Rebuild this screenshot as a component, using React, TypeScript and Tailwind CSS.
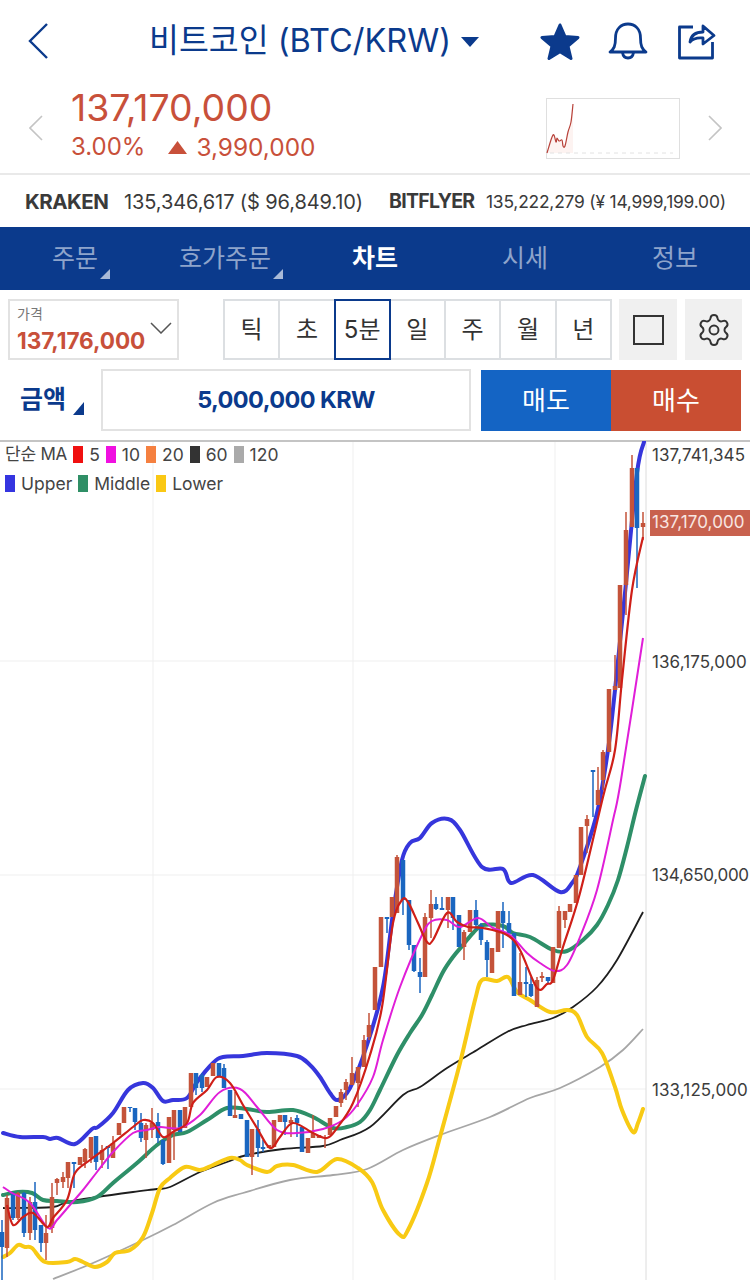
import { Settings } from 'lucide-react';

type Pt = [number, number];
// x, wick top, wick bottom, body top, body bottom, up
type Candle = [number, number, number, number, number, 0 | 1];

const NAVY = '#0b3a8c';
const RED = '#c8503a';

const upper: Pt[] = [
  [3, 1133], [20, 1137], [43, 1137], [50, 1139], [58, 1138], [75, 1144], [92, 1129], [98, 1127],
  [113, 1113], [128, 1090], [143, 1083], [153, 1088], [163, 1101], [173, 1100], [187, 1098],
  [197, 1082], [213, 1063], [223, 1057], [243, 1056], [267, 1053], [297, 1056], [310, 1065],
  [320, 1077], [330, 1093], [338, 1100], [350, 1088], [367, 1045], [383, 987], [393, 913],
  [402, 860], [410, 843], [420, 838], [432, 823], [448, 819], [460, 830], [482, 867], [503, 869],
  [511, 883], [533, 875], [560, 892], [572, 883], [580, 867], [597, 813], [608, 750], [615, 690],
  [625, 593], [637, 473], [644, 442],
];
const middle: Pt[] = [
  [3, 1195], [18, 1192], [32, 1193], [43, 1200], [57, 1201], [77, 1202], [97, 1197], [113, 1183],
  [137, 1163], [157, 1145], [173, 1135], [187, 1132], [207, 1120], [227, 1108], [247, 1109],
  [267, 1112], [293, 1110], [313, 1117], [333, 1128], [347, 1127], [360, 1122], [370, 1110],
  [380, 1090], [397, 1055], [410, 1033], [422, 1015], [432, 995], [443, 972], [453, 957],
  [463, 945], [473, 933], [483, 925], [503, 926], [513, 933], [530, 937], [553, 950], [567, 951],
  [583, 940], [597, 925], [608, 905], [618, 880], [627, 847], [636, 810], [645, 776],
];
const lower: Pt[] = [
  [3, 1257], [10, 1253], [18, 1245], [25, 1247], [32, 1248], [45, 1262], [67, 1262], [75, 1259],
  [83, 1262], [95, 1267], [107, 1262], [115, 1253], [130, 1250], [143, 1237], [152, 1213],
  [160, 1188], [170, 1178], [185, 1167], [200, 1170], [213, 1165], [230, 1158], [240, 1160],
  [247, 1165], [267, 1172], [277, 1166], [293, 1165], [317, 1172], [337, 1159], [358, 1168],
  [372, 1182], [383, 1210], [400, 1235], [408, 1230], [427, 1183], [440, 1137], [460, 1063],
  [475, 1000], [482, 980], [497, 981], [508, 977], [517, 992], [530, 1000], [550, 1012],
  [567, 1010], [577, 1015], [587, 1037], [602, 1053], [615, 1087], [622, 1110], [633, 1132],
  [638, 1123], [643, 1109],
];
const ma60: Pt[] = [
  [3, 1208], [17, 1208], [53, 1207], [67, 1202], [97, 1197], [133, 1192], [157, 1189], [170, 1187],
  [200, 1172], [227, 1162], [247, 1155], [283, 1149], [323, 1146], [340, 1140], [370, 1127],
  [403, 1095], [420, 1087], [447, 1068], [477, 1050], [507, 1032], [527, 1025], [553, 1018],
  [573, 1007], [597, 987], [617, 960], [643, 912],
];
const ma120: Pt[] = [
  [53, 1279], [93, 1263], [143, 1240], [173, 1225], [213, 1203], [243, 1193], [290, 1180],
  [333, 1175], [367, 1169], [403, 1150], [440, 1135], [490, 1117], [530, 1098], [560, 1088],
  [600, 1067], [623, 1050], [643, 1029],
];
const ma10: Pt[] = [
  [3, 1187], [12, 1193], [30, 1203], [48, 1228], [57, 1220], [70, 1205], [83, 1190], [97, 1172],
  [113, 1152], [133, 1133], [147, 1130], [160, 1127], [180, 1128], [200, 1115], [220, 1092],
  [240, 1089], [257, 1107], [277, 1130], [297, 1133], [323, 1129], [343, 1120], [357, 1105],
  [373, 1077], [383, 1040], [400, 987], [422, 935], [432, 921], [447, 920], [460, 927], [478, 918],
  [493, 928], [510, 935], [527, 953], [540, 963], [555, 971], [567, 965], [580, 937], [597, 890],
  [613, 820], [621, 780], [643, 638],
];
const ma5: Pt[] = [
  [7, 1205], [13, 1225], [23, 1217], [33, 1213], [47, 1227], [53, 1218], [67, 1200], [75, 1173],
  [90, 1160], [113, 1143], [133, 1127], [143, 1120], [153, 1123], [163, 1137], [173, 1132],
  [187, 1123], [193, 1103], [207, 1090], [217, 1077], [230, 1083], [243, 1105], [257, 1128],
  [270, 1148], [280, 1137], [293, 1123], [313, 1133], [327, 1138], [337, 1128], [353, 1103],
  [370, 1055], [382, 1007], [393, 923], [402, 900], [408, 902], [418, 923], [427, 942], [433, 940],
  [447, 913], [457, 922], [468, 927], [483, 928], [507, 935], [520, 950], [537, 988], [547, 984],
  [553, 980], [563, 947], [580, 893], [603, 797], [615, 750], [622, 680], [632, 590], [643, 537],
];

const candles: Candle[] = [
  [2, 1220, 1280, 1232, 1247, 0], [7, 1195, 1257, 1198, 1248, 1], [13, 1192, 1220, 1193, 1218, 0],
  [18, 1192, 1220, 1193, 1218, 1], [24, 1192, 1237, 1193, 1233, 0], [30, 1197, 1240, 1202, 1233, 1],
  [35, 1182, 1240, 1202, 1230, 0], [41, 1225, 1252, 1225, 1243, 0], [46, 1215, 1260, 1233, 1243, 1],
  [52, 1183, 1233, 1197, 1228, 1], [57, 1178, 1195, 1179, 1183, 1], [63, 1172, 1188, 1177, 1182, 1],
  [68, 1162, 1188, 1162, 1178, 1], [74, 1162, 1188, 1162, 1164, 0], [80, 1157, 1165, 1157, 1165, 1],
  [85, 1148, 1168, 1149, 1162, 1], [91, 1137, 1163, 1137, 1158, 1], [96, 1136, 1170, 1136, 1162, 0],
  [102, 1145, 1168, 1150, 1160, 1], [108, 1146, 1169, 1146, 1148, 0], [113, 1136, 1158, 1143, 1158, 1],
  [119, 1123, 1135, 1123, 1135, 1], [124, 1107, 1123, 1107, 1123, 1], [130, 1107, 1112, 1107, 1108, 0],
  [135, 1108, 1130, 1108, 1122, 0], [141, 1113, 1142, 1123, 1138, 0], [146, 1123, 1158, 1125, 1140, 1],
  [152, 1108, 1138, 1123, 1130, 1], [158, 1113, 1143, 1122, 1138, 0], [163, 1140, 1165, 1140, 1164, 0],
  [169, 1117, 1163, 1117, 1163, 1], [174, 1110, 1160, 1110, 1130, 1], [180, 1110, 1132, 1110, 1132, 0],
  [185, 1107, 1128, 1107, 1128, 1], [191, 1073, 1107, 1073, 1107, 1], [196, 1073, 1095, 1073, 1088, 0],
  [202, 1073, 1092, 1075, 1088, 0], [207, 1077, 1087, 1077, 1087, 1], [213, 1063, 1076, 1063, 1076, 1],
  [219, 1063, 1076, 1063, 1076, 0], [224, 1064, 1088, 1068, 1088, 0], [230, 1090, 1116, 1090, 1116, 0],
  [235, 1092, 1118, 1115, 1118, 1], [241, 1114, 1119, 1114, 1119, 0], [247, 1120, 1157, 1120, 1157, 0],
  [252, 1129, 1175, 1129, 1157, 1], [258, 1120, 1157, 1129, 1148, 0], [263, 1140, 1152, 1147, 1149, 0],
  [269, 1145, 1148, 1145, 1148, 1], [274, 1120, 1147, 1120, 1147, 1], [280, 1115, 1122, 1115, 1122, 1],
  [285, 1115, 1135, 1115, 1122, 0], [291, 1117, 1137, 1120, 1123, 1], [297, 1115, 1137, 1118, 1123, 0],
  [302, 1127, 1152, 1127, 1152, 0], [308, 1138, 1153, 1138, 1153, 1], [313, 1115, 1138, 1133, 1138, 1],
  [319, 1135, 1138, 1135, 1138, 1], [325, 1135, 1148, 1137, 1138, 1], [330, 1118, 1135, 1118, 1135, 1],
  [336, 1106, 1117, 1106, 1117, 1], [341, 1089, 1107, 1092, 1103, 1], [346, 1079, 1100, 1082, 1090, 1],
  [352, 1057, 1085, 1073, 1085, 1], [358, 1067, 1107, 1067, 1083, 1], [364, 1035, 1067, 1040, 1067, 1],
  [369, 1013, 1040, 1025, 1037, 1], [375, 967, 1010, 967, 1010, 1], [381, 917, 967, 917, 967, 1],
  [387, 917, 933, 917, 919, 0], [392, 897, 917, 897, 917, 1], [397, 855, 913, 857, 913, 1],
  [403, 860, 915, 860, 900, 0], [409, 900, 950, 900, 945, 0], [414, 945, 972, 945, 971, 0],
  [420, 958, 993, 972, 977, 0], [425, 913, 977, 917, 977, 1], [431, 890, 938, 904, 918, 1],
  [436, 897, 910, 904, 909, 0], [442, 897, 910, 908, 910, 0], [448, 897, 928, 897, 910, 1],
  [453, 897, 930, 897, 918, 0], [459, 915, 947, 915, 947, 0], [464, 930, 960, 932, 947, 1],
  [470, 910, 932, 910, 932, 1], [476, 900, 930, 910, 925, 0], [481, 923, 945, 925, 940, 0],
  [487, 940, 977, 942, 960, 0], [492, 948, 973, 948, 973, 1], [498, 911, 952, 911, 952, 1],
  [503, 902, 948, 911, 923, 0], [509, 911, 935, 923, 933, 0], [514, 933, 996, 933, 996, 0],
  [520, 953, 995, 982, 995, 1], [526, 967, 997, 982, 984, 0], [531, 977, 997, 984, 996, 0],
  [537, 977, 1007, 980, 1007, 1], [542, 972, 982, 976, 978, 1], [548, 977, 984, 977, 981, 0],
  [553, 947, 983, 947, 983, 1], [559, 906, 948, 911, 948, 1], [565, 911, 928, 911, 920, 1],
  [570, 904, 912, 904, 912, 1], [576, 875, 903, 875, 903, 1], [581, 827, 875, 827, 875, 1],
  [587, 815, 853, 819, 826, 1], [593, 770, 817, 770, 772, 0], [598, 767, 805, 790, 805, 1],
  [603, 750, 790, 752, 780, 1], [609, 689, 752, 689, 752, 1], [615, 655, 690, 686, 690, 1],
  [620, 585, 688, 585, 688, 1], [626, 512, 615, 530, 585, 1], [632, 455, 527, 468, 527, 1],
  [637, 468, 588, 468, 528, 0], [643, 512, 540, 523, 527, 1],
];

const spark: Pt[] = [
  [547, 153], [553, 135], [556, 142], [557, 138], [559, 141], [562, 140], [563, 146], [565, 146],
  [568, 132], [571, 122], [573, 104],
];

// catmull-rom로 부드럽게 연결
const smooth = (pts: Pt[]) => {
  let d = `M${pts[0][0]} ${pts[0][1]}`;
  for (let i = 0; i < pts.length - 1; i++) {
    const p0 = pts[Math.max(i - 1, 0)];
    const p1 = pts[i];
    const p2 = pts[i + 1];
    const p3 = pts[Math.min(i + 2, pts.length - 1)];
    const c1x = p1[0] + (p2[0] - p0[0]) / 6;
    const c1y = p1[1] + (p2[1] - p0[1]) / 6;
    const c2x = p2[0] - (p3[0] - p1[0]) / 6;
    const c2y = p2[1] - (p3[1] - p1[1]) / 6;
    d += ` C${c1x} ${c1y} ${c2x} ${c2y} ${p2[0]} ${p2[1]}`;
  }
  return d;
};

function Chevron({ dir, color, className }: { dir: 'l' | 'r'; color: string; className: string }) {
  return (
    <svg viewBox="0 0 14 26" className={className} fill="none" stroke={color} strokeWidth="1.6">
      <path d={dir === 'l' ? 'M13 1 1 13l12 12' : 'M1 1l12 12L1 25'} />
    </svg>
  );
}

function Header() {
  return (
    <div className="flex h-[82px] items-center">
      <svg viewBox="0 0 20 36" className="ml-[28px] h-[36px] w-[20px]" fill="none" stroke={NAVY} strokeWidth="2.4">
        <path d="M19 1 2 18l17 17" />
      </svg>
      <div className="ml-[101px] flex items-center">
        <span className="text-[32.5px] leading-none text-[#0b3a8c]">비트코인 (BTC/KRW)</span>
        <svg viewBox="0 0 18 10" className="ml-[10px] mt-[2px] h-[10px] w-[18px]" fill={NAVY}>
          <path d="M0 0h18L9 10z" />
        </svg>
      </div>
      <div className="ml-auto mr-[34px] flex items-center">
        <svg viewBox="0 0 40 38" className="h-[38px] w-[40px]" fill={NAVY} stroke={NAVY} strokeWidth="3" strokeLinejoin="round">
          <path d="M20 3l5 11.5 13 1-10 8.5 3 12.5-11-6.700-11 6.700 3-12.500-10-8.500 13-1z" />
        </svg>
        <svg viewBox="0 0 40 38" className="ml-[28px] h-[38px] w-[40px]" fill="none" stroke={NAVY} strokeWidth="2.8" strokeLinejoin="round">
          <path d="M2 30c4-3 5.500-6 5.500-14C7.500 7 13 2 20 2s12.500 5 12.500 14c0 8 1.500 11 5.500 14z" />
          <path d="M14.500 30.500c.5 3.500 2.500 5.500 5.500 5.500s5-2 5.500-5.500" />
        </svg>
        <svg viewBox="0 0 38 38" className="ml-[30px] h-[38px] w-[38px]" fill="none" stroke={NAVY} strokeWidth="2.8" strokeLinejoin="round">
          <path d="M15 5H1.500v31h33V20" />
          <path d="M12 20c1-6.500 6-10 13-10V4l11 9.500L25 22v-6c-5-.5-10 .5-13 4z" />
        </svg>
      </div>
    </div>
  );
}

function PriceRow() {
  return (
    <div className="flex h-[93px] items-start border-b-2 border-[#e9e9e9]">
      <Chevron dir="l" color="#c4c4c4" className="ml-[29px] mt-[33px] h-[26px] w-[14px]" />
      <div className="ml-[28px] text-[#c8503a]">
        <div className="mt-[4px] text-[37.400px] leading-[44px]">137,170,000</div>
        <div className="mt-[2px] flex items-center text-[24px] leading-[30px]">
          <span>3.00%</span>
          <svg viewBox="0 0 19 13" className="ml-[23px] mr-[9px] h-[13px] w-[19px]" fill={RED}>
            <path d="M9.500 0 19 13H0z" />
          </svg>
          <span className="text-[24.400px]">3,990,000</span>
        </div>
      </div>
      <svg viewBox="546 98 134 61" className="ml-auto mt-[16px] h-[61px] w-[134px]" fill="none">
        <rect x="546.500" y="98.500" width="133" height="60" stroke="#dfdfdf" />
        <path d="M547 153 553 135 556 142 559 141 562 140 565 146 568 132 571 122 573 104V153z" fill="#fdf3f1" />
        <path d="M550 153h123" stroke="#e2e2e2" strokeDasharray="4 4" />
        <path d={smooth(spark)} stroke="#b8423a" strokeWidth="1.200" />
      </svg>
      <Chevron dir="r" color="#c4c4c4" className="ml-[28px] mr-[28px] mt-[33px] h-[26px] w-[14px]" />
    </div>
  );
}

function ExchangeRow() {
  return (
    <div className="flex h-[52px] items-center whitespace-nowrap pl-[25px] pt-[2px] text-[#3a3a3a]">
      <span className="w-[99px] text-[20.500px] font-bold tracking-[-0.5px]">KRAKEN</span>
      <span className="w-[265px] text-[20px] tracking-[-0.1px]">135,346,617 ($ 96,849.10)</span>
      <span className="w-[97px] text-[19.500px] font-bold tracking-[-0.7px]">BITFLYER</span>
      <span className="text-[17.400px] tracking-[-0.2px]">135,222,279 (¥ 14,999,199.00)</span>
    </div>
  );
}

const tabs = [
  { label: '주문', corner: true },
  { label: '호가주문', corner: true },
  { label: '차트', active: true },
  { label: '시세' },
  { label: '정보' },
];

function Tabs() {
  return (
    <div className="grid h-[63px] grid-cols-5 bg-[#0b3a8c]">
      {tabs.map((tab) => (
        <div key={tab.label} className="flex items-center justify-center">
          <span
            className={`relative text-[25px] leading-none ${
              tab.active ? 'font-bold text-white' : 'text-[#8ea4cb]'
            }`}
          >
            {tab.label}
            {tab.corner && (
              <svg viewBox="0 0 10 10" className="absolute -right-[12px] bottom-[-8px] h-[10px] w-[10px]" fill="#a9bad8">
                <path d="M10 0v10H0z" />
              </svg>
            )}
          </span>
        </div>
      ))}
    </div>
  );
}

const periods = ['틱', '초', '5분', '일', '주', '월', '년'];

function Controls() {
  return (
    <div className="mt-[9px] flex h-[61px] pl-[8px]">
      <div className="relative h-[61px] w-[171px] border-2 border-[#e2e2e2] pl-[7px]">
        <div className="mt-[3px] text-[14px] leading-[20px] text-[#777]">가격</div>
        <div className="mt-[4px] text-[22.600px] font-bold leading-[26px] tracking-[-0.1px] text-[#c8503a]">137,176,000</div>
        <svg viewBox="0 0 22 12" className="absolute right-[5px] top-[21px] h-[12px] w-[22px]" fill="none" stroke="#555" strokeWidth="1.500">
          <path d="M1 1l10 10L21 1" />
        </svg>
      </div>
      <div className="ml-[44px] flex h-[61px] w-[389px] border-2 border-[#dcdfe2]">
        {periods.map((p) =>
          p === '5분' ? (
            <div key={p} className="-my-[2px] flex w-[57px] shrink-0 items-center justify-center border-2 border-[#0b3a8c] text-[24px] text-[#333]">
              {p}
            </div>
          ) : (
            <div key={p} className="flex flex-1 items-center justify-center border-l-2 border-[#dcdfe2] text-[24px] text-[#333] first:border-l-0 [&:nth-child(4)]:border-l-0">
              {p}
            </div>
          )
        )}
      </div>
      <div className="ml-[7px] flex h-[61px] w-[58px] items-center justify-center bg-[#f0f0f0]">
        <div className="h-[30px] w-[31px] border-2 border-[#333]" />
      </div>
      <div className="ml-[8px] flex h-[61px] w-[57px] items-center justify-center bg-[#f0f0f0]">
        <Settings className="h-[36px] w-[36px] text-[#333]" strokeWidth={1.300} />
      </div>
    </div>
  );
}

function OrderRow() {
  return (
    <div className="mt-[9px] flex h-[62px] items-center">
      <span className="ml-[20px] w-[53px] text-[25px] font-bold text-[#0b3a8c]">금액</span>
      <svg viewBox="0 0 11 13" className="mt-[17px] h-[13px] w-[11px]" fill={NAVY}>
        <path d="M11 0v13H0z" />
      </svg>
      <div className="ml-[17px] flex h-[62px] w-[370px] items-center justify-center border-2 border-[#e2e2e2] text-[23.500px] font-bold tracking-[-0.6px] text-[#0b3a8c]">
        5,000,000 KRW
      </div>
      <div className="ml-[10px] flex h-[61px] w-[130px] items-center justify-center bg-[#1464c4] text-[26px] text-white">매도</div>
      <div className="flex h-[61px] w-[130px] items-center justify-center bg-[#c94e32] text-[26px] text-white">매수</div>
    </div>
  );
}

function Swatch({ color }: { color: string }) {
  return <span className="mr-[6px] inline-block h-[17px] w-[10px]" style={{ backgroundColor: color }} />;
}

function Legend() {
  return (
    <div className="absolute -top-[2px] left-[5px] text-[17.500px] leading-[29px] text-[#444]">
      <div className="flex items-center whitespace-nowrap">
        <span className="mr-[6px] text-[17px] tracking-[-0.2px]">단순 MA</span>
        <Swatch color="#f01010" /><span className="mr-[6px]">5</span>
        <Swatch color="#f010e0" /><span className="mr-[6px]">10</span>
        <Swatch color="#f58040" /><span className="mr-[6px]">20</span>
        <Swatch color="#333333" /><span className="mr-[6px]">60</span>
        <Swatch color="#aaaaaa" /><span>120</span>
      </div>
      <div className="flex items-center whitespace-nowrap">
        <Swatch color="#3535e0" /><span className="mr-[6px]">Upper</span>
        <Swatch color="#2f8f66" /><span className="mr-[6px]">Middle</span>
        <Swatch color="#fac814" /><span>Lower</span>
      </div>
    </div>
  );
}

const axisLabels = [
  { top: 'top-[1px]', spacing: 'tracking-[0.1px]', text: '137,741,345' },
  { top: 'top-[208px]', spacing: 'tracking-[0.1px]', text: '136,175,000' },
  { top: 'top-[421px]', spacing: 'tracking-[-0.3px]', text: '134,650,000' },
  { top: 'top-[636px]', spacing: 'tracking-[0.1px]', text: '133,125,000' },
  { top: 'top-[836px]', spacing: 'tracking-[-0.3px]', text: '131,649,175' },
];

function Chart() {
  return (
    <div className="relative h-[840px] border-t-2 border-[#c4c4c4]">
      <svg viewBox="0 441 750 840" className="absolute -top-[1px] left-0 h-[840px] w-[750px]" fill="none">
        {[661, 875, 1089].map((y) => (
          <line key={y} x1="0" x2="646" y1={y} y2={y} stroke="#efefef" />
        ))}
        {[153, 353, 555].map((x) => (
          <line key={x} x1={x} x2={x} y1="442" y2="1280" stroke="#efefef" />
        ))}
        <line x1="646" x2="646" y1="442" y2="1280" stroke="#dcdcdc" />
        <path d={smooth(ma120)} stroke="#a6a6a6" strokeWidth="1.800" />
        <path d={smooth(ma60)} stroke="#1e1e1e" strokeWidth="1.800" />
        <path d={smooth(upper)} stroke="#3636dc" strokeWidth="4" strokeLinecap="round" />
        <path d={smooth(middle)} stroke="#2e8f68" strokeWidth="4" strokeLinecap="round" />
        <path d={smooth(lower)} stroke="#f8ca14" strokeWidth="4" strokeLinecap="round" />
        {candles.map(([x, wt, wb, bt, bb, up]) => (
          <g key={x} fill={up ? '#c4533a' : '#1a66c0'}>
            <rect x={x - 0.75} y={wt} width="1.500" height={wb - wt} />
            <rect x={x - 2.25} y={bt} width="4.500" height={Math.max(bb - bt, 1)} />
          </g>
        ))}
        <path d={smooth(ma10)} stroke="#e01ed8" strokeWidth="2" />
        <path d={smooth(ma5)} stroke="#cf1f18" strokeWidth="2.200" />
      </svg>
      <Legend />
      {axisLabels.map((label) => (
        <div
          key={label.text}
          className={`absolute left-[652px] text-[17px] leading-[24px] text-[#3c3c3c] ${label.top} ${label.spacing}`}
        >
          {label.text}
        </div>
      ))}
      <div className="absolute left-[650px] top-[68px] flex h-[26px] w-[100px] items-center bg-[#c8614e] pl-[2px] text-[17px] tracking-[0.1px] text-[#f8e6e2]">
        137,170,000
      </div>
    </div>
  );
}

export default function App() {
  return (
    <div className="h-[1280px] w-[750px] overflow-hidden bg-white font-['Inter','Noto_Sans_CJK_KR',sans-serif]">
      <Header />
      <PriceRow />
      <ExchangeRow />
      <Tabs />
      <Controls />
      <OrderRow />
      <div className="h-[9px]" />
      <Chart />
    </div>
  );
}
